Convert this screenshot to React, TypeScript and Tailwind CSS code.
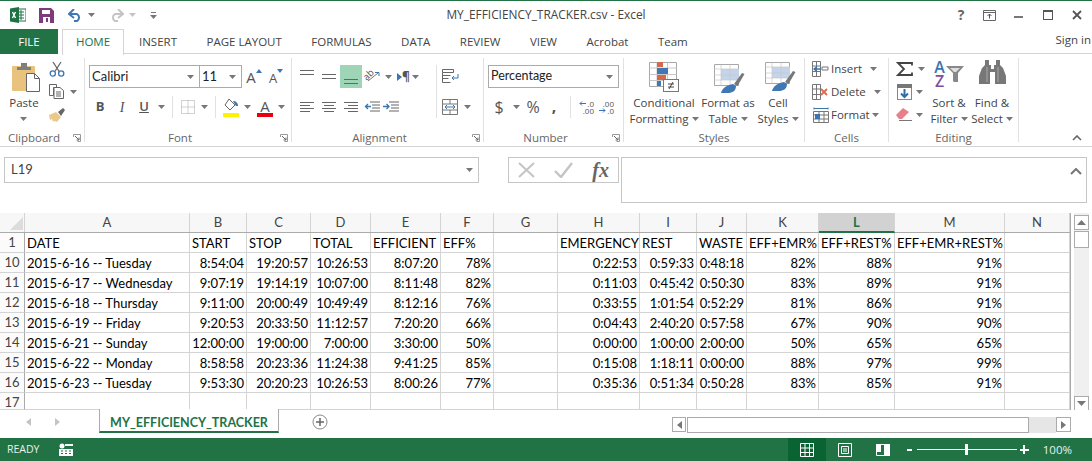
import React from 'react';

const Caret = ({ c = '#777' }: { c?: string }) => (
  <svg width="7" height="4" viewBox="0 0 7 4" className="shrink-0"><path d="M0 0h7L3.5 4z" fill={c} /></svg>
);
const Cell = ({ className = 'w-[22px]', children }: { className?: string; children?: React.ReactNode }) => (
  <span className={`flex items-center justify-center h-full shrink-0 ${className}`}>{children}</span>
);
const Sep = ({ className = 'w-[10px]' }: { className?: string }) => (
  <span className={`flex items-center justify-center h-full shrink-0 ${className}`}><span className="w-px h-[22px] bg-[#e1e1e1]" /></span>
);
const Launcher = () => (
  <svg width="8" height="8" viewBox="0 0 8 8"><path d="M.5 3V.5H7.5V7.5H4.5" fill="none" stroke="#999" /><path d="M2 2l4 4M3.5 6H6V3.5" fill="none" stroke="#666" /></svg>
);
const Lines = ({ rows }: { rows: [number, number, number][] }) => (
  <svg width="16" height="16" viewBox="0 0 16 16">{rows.map(([y, a, b], i) => <rect key={i} x={a} y={y} width={b - a} height="1" fill="#666" />)}</svg>
);

function Group({ w, label, launcher, children }: { w: string; label: string; launcher?: boolean; children: React.ReactNode }) {
  return (
    <div className={`flex h-full shrink-0 ${w}`}>
      <div className="flex-1 min-w-0 flex flex-col">
        <div className="h-[76px]">{children}</div>
        <div className="h-[16px] flex items-center text-[#666] text-[11.500px]">
          <span className="flex-1 text-center">{label}</span>
          {launcher && <span className="w-[16px] flex justify-end pr-[3px]"><Launcher /></span>}
        </div>
      </div>
      <div className="w-px my-[4px] bg-[#e1e1e1]" />
    </div>
  );
}

const PasteIcon = () => (
  <svg width="30" height="30" viewBox="0 0 30 30">
    <rect x="1" y="4" width="23" height="25" rx="1" fill="#e9c27d" />
    <path d="M6 8V5h4V1h6v4h4v3z" fill="#7f7f7f" />
    <path d="M15.500 11.500h8l5 5v13h-13z" fill="#fff" stroke="#666" />
    <path d="M23.500 11.500v5h5" fill="none" stroke="#666" />
  </svg>
);
const Scissors = () => (
  <svg width="16" height="16" viewBox="0 0 16 16" fill="none">
    <path d="M4 1l6.500 10M12 1L5.500 11" stroke="#666" strokeWidth="1.300" />
    <circle cx="3.800" cy="12.500" r="2.600" stroke="#3a76b0" strokeWidth="1.300" />
    <circle cx="12.200" cy="12.500" r="2.600" stroke="#3a76b0" strokeWidth="1.300" />
  </svg>
);
const CopyIcon = () => (
  <svg width="16" height="15" viewBox="0 0 16 15" fill="#fff" stroke="#666">
    <path d="M.5.500h7v3h-3v8h-4z" /><path d="M5 3.500h6l3.500 3v8H5z" /><path d="M7 8h5M7 10h5M7 12h5" />
  </svg>
);
const Brush = () => (
  <svg width="17" height="15" viewBox="0 0 17 15">
    <path d="M0 8l7-3 5 5-4 5-3-1-1 1-1-3-2 1z" fill="#ecc98b" />
    <path d="M9 5l5-4 2 2-4 6z" fill="#666" />
  </svg>
);
const GrowA = ({ up }: { up: boolean }) => (
  <span className="flex items-start h-[18px] font-['Open_Sans'] text-[#555]">
    <span className={up ? 'text-[15px] leading-[18px]' : 'text-[13px] leading-[20px]'}>A</span>
    <svg width="6" height="4" viewBox="0 0 6 4" className="mt-[1px]"><path d={up ? 'M0 4h6L3 0z' : 'M0 0h6L3 4z'} fill="#3a76b0" /></svg>
  </span>
);
const BordersIcon = () => (
  <svg width="14" height="14" viewBox="0 0 14 14" fill="none" stroke="#a5a5a5" strokeDasharray="1 1">
    <path d="M.5 .5h13v13h-13zM7 .5v13M.5 7h13" />
  </svg>
);
const FillIcon = () => (
  <svg width="16" height="19" viewBox="0 0 16 19">
    <path d="M6 1l6 6-5 5-5-5z" fill="#fff" stroke="#666" /><path d="M10 3c3 0 5 2 5 5h-2z" fill="#3a76b0" />
    <rect y="15" width="16" height="4" fill="#fff200" />
  </svg>
);
const FontColorIcon = () => (
  <span className="relative flex flex-col items-center w-[16px] h-[19px]">
    <span className="text-[#555] font-['Open_Sans'] text-[15px] leading-[16px]">A</span>
    <span className="w-[16px] h-[4px] bg-[#e8000d] -mt-[1px]" />
  </span>
);
const Orient = () => (
  <span className="flex items-center w-[19px] h-[17px]">
    <span className="text-[9.500px] leading-[10px] text-[#555] -rotate-45 font-['Open_Sans'] -ml-[1px] -mt-[3px]">ab</span>
    <svg width="9" height="10" viewBox="0 0 9 10" fill="none" className="-ml-[3px] mt-[1px] overflow-visible">
      <path d="M-3 9L7 1" stroke="#777" />
      <path d="M8 4V.5H4" stroke="#3a76b0" />
    </svg>
  </span>
);
const Rtl = () => (
  <span className="flex items-center h-[14px] text-[12px] leading-[14px] text-[#555] font-['Open_Sans']">
    <svg width="5" height="8" viewBox="0 0 5 8"><path d="M0 0l5 4-5 4z" fill="#3a76b0" /></svg>
    <b>¶</b>
  </span>
);
const Indent = ({ rev }: { rev?: boolean }) => (
  <svg width="16" height="12" viewBox="0 0 16 12">
    <path d="M6 1h10M8 4h8M8 7h8M6 10h10" stroke="#666" />
    <path d={rev ? 'M7 5.500H1.500M4 3L1.500 5.500 4 8' : 'M0 5.500h6M3.500 3L6 5.500 3.500 8'} stroke="#3a76b0" strokeWidth="1.300" fill="none" />
  </svg>
);
const WrapIcon = () => (
  <svg width="17" height="15" viewBox="0 0 17 15" fill="none">
    <path d="M.5.500h11v3H.5zM.5 6.500h8M.5 9.500h6M.5 13.500h8M.5 3.500v10" stroke="#666" />
    <path d="M16 5v4h-6M12 7l-2 2 2 2" stroke="#3a76b0" />
  </svg>
);
const MergeIcon = () => (
  <svg width="16" height="16" viewBox="0 0 16 16" fill="none">
    <path d="M.5.500h15v15H.5zM.5 5h15M.5 11h15M8 .5V5M8 11v4.500" stroke="#777" />
    <path d="M3 8h10M5 6L3 8l2 2M11 6l2 2-2 2" stroke="#3a76b0" />
  </svg>
);
const DecIcon = ({ inc }: { inc: boolean }) => (
  <span className="flex flex-col items-end w-[16px] text-[8px] leading-[7px] text-[#555] font-['Open_Sans']">
    <span className="flex items-center gap-px h-[7px]">
      {inc && <svg width="7" height="5" viewBox="0 0 7 5"><path d="M7 2.500H1M3 .5L1 2.500l2 2" stroke="#3a76b0" fill="none" /></svg>}
      {inc ? '.0' : '.00'}
    </span>
    <span className="flex items-center gap-px h-[7px]">
      {!inc && <svg width="7" height="5" viewBox="0 0 7 5"><path d="M0 2.500h6M4 .5l2 2-2 2" stroke="#3a76b0" fill="none" /></svg>}
      {inc ? '.00' : '.0'}
    </span>
  </span>
);
const CondIcon = () => (
  <svg width="30" height="30" viewBox="0 0 30 30">
    <path d="M.5.500h27v24H.5z" fill="#fff" stroke="#a8a8a8" />
    <path d="M.5 6h27M.5 12.500h27M.5 18.500h27M8 .5v24M18.500.5v24" stroke="#c8c8c8" />
    <rect x="8" y="0" width="6" height="5" fill="#d5694a" /><rect x="8" y="6" width="11" height="6" fill="#3f78b5" />
    <rect x="8" y="13" width="9" height="5" fill="#d5694a" /><rect x="8" y="19" width="4" height="5" fill="#3f78b5" />
    <rect x="14.500" y="17.500" width="15" height="12" fill="#fff" stroke="#777" />
    <path d="M19 22h6M19 25h6M24 20l-4 7" stroke="#444" />
  </svg>
);
const TableBrush = ({ fill, className = '' }: { fill: string; className?: string }) => (
  <svg width="31" height="30" viewBox="0 0 31 30" className={className}>
    <path d="M.5.500h24v21H.5z" fill="#fff" stroke="#a8a8a8" />
    <rect x="7" y="5" width="18" height="11" fill={fill} />
    <path d="M.5 5h24M.5 11h24M.5 16h24M7 .5v21M16 .5v21" stroke="#c8c8c8" strokeOpacity=".7" />
    <path d="M20 20L28 9l2.500 1-7 12z" fill="#777" />
    <path d="M7 29c1-5 6-8 12-9l3 2c0 5-4 7-8 7z" fill="#3f78b5" />
  </svg>
);
const InsertIcon = () => (
  <svg width="17" height="16" viewBox="0 0 17 16" fill="none">
    <path d="M.5.500h8v15h-8zM.5 5h8M.5 10.500h8M4.500.5v15M10 6h6v3h-6z" stroke="#777" />
    <path d="M9 8H2M5 5.500L2 8l3 2.500" stroke="#3a76b0" strokeWidth="1.300" />
  </svg>
);
const DeleteIcon = () => (
  <svg width="17" height="16" viewBox="0 0 17 16" fill="none">
    <path d="M.5.500h8v15h-8zM.5 5h8M.5 10.500h8M4.500.5v15" stroke="#777" />
    <path d="M9 5l6 6M15 5l-6 6" stroke="#e0684b" strokeWidth="1.800" />
  </svg>
);
const FormatIcon = () => (
  <svg width="16" height="16" viewBox="0 0 16 16" fill="none">
    <path d="M1 1.500h14M1 .5v2M15 .5v2" stroke="#3a76b0" />
    <path d="M.5 4.500h15v11H.5zM.5 8h15M.5 12h15M6 4.500v11M11 4.500v11" stroke="#777" />
    <rect x="2" y="7" width="5" height="5" fill="#3a76b0" />
  </svg>
);
const SigmaIcon = () => (
  <svg width="17" height="14" viewBox="0 0 17 14" fill="none"><path d="M16 3.500V1H2l6 6-6 6h14v-2.500" stroke="#444" strokeWidth="1.800" /></svg>
);
const FillDown = () => (
  <svg width="15" height="16" viewBox="0 0 15 16" fill="none">
    <rect x=".5" y=".5" width="14" height="15" fill="#fff" stroke="#888" /><rect x="0" y="0" width="15" height="4" fill="#777" />
    <path d="M7.500 5v8M4 9.500l3.500 3.500L11 9.500" stroke="#2f6ea8" strokeWidth="2" />
  </svg>
);
const Eraser = () => (
  <svg width="16" height="13" viewBox="0 0 16 13"><path d="M0 7l7-7 6 4-7 7H3z" fill="#e8808c" /><path d="M3 12.500h13" stroke="#777" /></svg>
);
const SortIcon = () => (
  <span className="flex items-start h-[28px] w-[32px] -mt-[2px]">
    <span className="flex flex-col items-center font-['Open_Sans'] font-semibold text-[16px] leading-[14px] w-[13px]">
      <span className="h-[14px] text-[#3a76b0]">A</span>
      <span className="h-[14px] text-[#7f4f9b]">Z</span>
    </span>
    <svg width="18" height="16" viewBox="0 0 18 16" className="mt-[6px]"><path d="M0 0h18l-6 7v9H8l-1-1V7z" fill="#888" /><path d="M4 2h10l-4 4H8z" fill="#ddd" /></svg>
  </span>
);
const Binoculars = () => (
  <svg width="27" height="24" viewBox="0 0 27 24" fill="#777" className="-mt-[2px]">
    <path d="M6 0h4v5h2v4h3V5h2V0h4v5l3 3 3 8v8H16V12h-5v12H0v-8l3-8 3-3z" />
    <path d="M8 7v15M19 7v15" stroke="#aaa" />
  </svg>
);

function Big({ w, icon, lines, iconCls = 'justify-center' }: { w: string; icon: React.ReactNode; lines: React.ReactNode[]; iconCls?: string }) {
  return (
    <div className={`flex flex-col items-center pt-[8px] shrink-0 ${w}`}>
      <div className={`h-[30px] w-full flex ${iconCls}`}>{icon}</div>
      <div className="mt-[3px] whitespace-nowrap text-center leading-[16px]">
        {lines.map((l, i) => <div key={i} className="flex items-center justify-center gap-[3px] h-[16px]">{l}</div>)}
      </div>
    </div>
  );
}
const Small = ({ icon, text, gap }: { icon: React.ReactNode; text: string; gap: string }) => (
  <div className="flex items-center h-[23px]">
    <Cell className="w-[17px]">{icon}</Cell>
    <span className={`ml-[2px] ${gap}`}>{text}</span>
    <Caret />
  </div>
);

const Ribbon = () => (
  <div className="flex h-[93px] border-b border-[#d4d4d4] text-[11.500px] text-[#444]">
    <Group w="w-[85px]" label="Clipboard" launcher>
      <div className="flex h-full">
        <Big w="w-[48px]" icon={<PasteIcon />} iconCls="justify-center pl-[4px]" lines={['Paste', <Caret />]} />
        <div className="pt-[3px] w-[36px]">
          <div className="h-[23px] flex items-center pl-[1px]"><Scissors /></div>
          <div className="h-[23px] flex items-center pl-[1px] gap-[5px]"><CopyIcon /><Caret /></div>
          <div className="h-[23px] flex items-center pl-[1px]"><Brush /></div>
        </div>
      </div>
    </Group>
    <Group w="w-[207px]" label="Font" launcher>
      <div className="pt-[11px] pl-[4px]">
        <div className="flex items-center h-[23px]">
          <div className="w-[111px] h-full border border-[#ababab] flex items-center justify-between pl-[2px] pr-[5px] text-[13px] text-[#222] font-['Lato']">Calibri<Caret /></div>
          <div className="w-[43px] -ml-px h-full border border-[#ababab] flex items-center justify-between pl-[2px] pr-[5px] text-[13px] text-[#222] font-['Lato']">11<Caret /></div>
          <Cell className="w-[22px] ml-[1px]"><GrowA up /></Cell>
          <Cell className="w-[22px]"><GrowA up={false} /></Cell>
        </div>
        <div className="flex items-center h-[22px] mt-[8px] text-[#555] font-['Liberation_Serif'] text-[14px]">
          <Cell><b className="font-['Open_Sans'] text-[13px]">B</b></Cell>
          <Cell><i className="text-[14px]">I</i></Cell>
          <Cell><span className="underline font-['Open_Sans'] font-semibold text-[13px]">U</span></Cell>
          <Cell className="w-[12px]"><Caret /></Cell>
          <Sep />
          <Cell className="w-[21px]"><BordersIcon /></Cell>
          <Cell className="w-[12px]"><Caret /></Cell>
          <Sep />
          <Cell><FillIcon /></Cell>
          <Cell className="w-[11px]"><Caret /></Cell>
          <Cell className="w-[22px] ml-[1px]"><FontColorIcon /></Cell>
          <Cell className="w-[11px]"><Caret /></Cell>
        </div>
      </div>
    </Group>
    <Group w="w-[192px]" label="Alignment" launcher>
      <div className="flex pl-[4px] pt-[11px]">
        <div className="w-[140px]">
          <div className="flex items-center h-[23px]">
            <Cell><Lines rows={[[1, 1, 15], [5, 1, 15]]} /></Cell>
            <Cell><Lines rows={[[5, 1, 15], [9, 1, 15]]} /></Cell>
            <Cell className="w-[22px] bg-[#9fd5b7]"><Lines rows={[[10, 1, 15], [14, 1, 15]]} /></Cell>
            <Cell className="ml-[2px]"><Orient /></Cell>
            <Cell className="w-[10px]"><Caret /></Cell>
            <Cell className="ml-[4px]"><Rtl /></Cell>
            <Cell className="w-[11px]"><Caret /></Cell>
          </div>
          <div className="flex items-center h-[22px] mt-[8px]">
            <Cell><Lines rows={[[3, 1, 15], [6, 1, 11], [9, 1, 15], [12, 1, 11]]} /></Cell>
            <Cell><Lines rows={[[3, 1, 15], [6, 3, 13], [9, 1, 15], [12, 3, 13]]} /></Cell>
            <Cell><Lines rows={[[3, 1, 15], [6, 5, 15], [9, 1, 15], [12, 5, 15]]} /></Cell>
            <Cell className="ml-[2px]"><Indent rev /></Cell>
            <Cell><Indent /></Cell>
          </div>
        </div>
        <div className="w-px h-[53px] bg-[#e1e1e1] mr-[2px]" />
        <div>
          <div className="h-[23px] w-[22px] flex items-center justify-center"><WrapIcon /></div>
          <div className="flex items-center h-[22px] mt-[8px]"><Cell><MergeIcon /></Cell><Cell className="w-[12px]"><Caret /></Cell></div>
        </div>
      </div>
    </Group>
    <Group w="w-[140px]" label="Number" launcher>
      <div className="pt-[11px] pl-[4px]">
        <div className="w-[131px] h-[23px] border border-[#ababab] flex items-center justify-between pl-[2px] pr-[5px] text-[12.500px] text-[#222] font-['Lato']">Percentage<Caret /></div>
        <div className="flex items-center h-[22px] mt-[8px] text-[#555] font-['Open_Sans']">
          <Cell><span className="text-[16px]">$</span></Cell>
          <Cell className="w-[12px]"><Caret /></Cell>
          <Cell><span className="text-[16px]">%</span></Cell>
          <Cell className="w-[20px]"><b className="text-[16px] leading-[12px] -mt-[2px]">,</b></Cell>
          <Sep className="w-[12px]" />
          <Cell className="w-[20px]"><DecIcon inc /></Cell>
          <Cell className="w-[20px]"><DecIcon inc={false} /></Cell>
        </div>
      </div>
    </Group>
    <Group w="w-[181px]" label="Styles">
      <div className="flex pl-[6px]">
        <Big w="w-[68px]" icon={<CondIcon />} lines={['Conditional', <>Formatting <Caret /></>]} />
        <Big w="w-[56px] ml-[2px]" icon={<TableBrush fill="#c4d4ea" className="mt-[2px] ml-[3px] shrink-0" />} iconCls="justify-center" lines={['Format as', <>Table <Caret /></>]} />
        <Big w="w-[40px] ml-[2px]" icon={<TableBrush fill="#c4d4ea" className="ml-[7px] shrink-0" />} iconCls="justify-start" lines={['Cell', <>Styles <Caret /></>]} />
      </div>
    </Group>
    <Group w="w-[84px]" label="Cells">
      <div className="pt-[3px] pl-[7px]">
        <Small icon={<InsertIcon />} text="Insert" gap="mr-[8px]" />
        <Small icon={<DeleteIcon />} text="Delete" gap="mr-[8px]" />
        <Small icon={<FormatIcon />} text="Format" gap="mr-[2px]" />
      </div>
    </Group>
    <Group w="w-[130px]" label="Editing">
      <div className="flex pl-[7px]">
        <div className="pt-[3px] w-[34px]">
          <div className="h-[23px] flex items-center gap-[5px]"><SigmaIcon /><Caret /></div>
          <div className="h-[23px] flex items-center gap-[4px]"><span className="w-[16px] flex justify-center"><FillDown /></span><Caret /></div>
          <div className="h-[23px] flex items-center gap-[4px]"><span className="w-[16px] flex justify-center"><Eraser /></span><Caret /></div>
        </div>
        <Big w="w-[40px] ml-[-1px]" icon={<SortIcon />} lines={['Sort &', <>Filter <Caret /></>]} />
        <Big w="w-[42px] ml-[2px]" icon={<Binoculars />} lines={['Find &', <>Select <Caret /></>]} />
      </div>
    </Group>
    <div className="flex-1 flex items-end justify-end pr-[10px] pb-[5px]">
      <svg width="10" height="6" viewBox="0 0 10 6" fill="none"><path d="M1 5l4-4 4 4" stroke="#666" strokeWidth="1.600" /></svg>
    </div>
  </div>
);

const tabs = ['INSERT', 'PAGE LAYOUT', 'FORMULAS', 'DATA', 'REVIEW', 'VIEW', 'Acrobat', 'Team'];

const widths = ['w-[25px]', 'w-[165px]', 'w-[57px]', 'w-[64px]', 'w-[60px]', 'w-[70px]', 'w-[53px]', 'w-[64px]', 'w-[82px]', 'w-[57px]', 'w-[50px]', 'w-[72px]', 'w-[76px]', 'w-[110px]', 'w-[65px]'];
const heads = ['', 'A', 'B', 'C', 'D', 'E', 'F', 'G', 'H', 'I', 'J', 'K', 'L', 'M', 'N'];
const row1 = ['1', 'DATE', 'START', 'STOP', 'TOTAL', 'EFFICIENT', 'EFF%', '', 'EMERGENCY', 'REST', 'WASTE', 'EFF+EMR%', 'EFF+REST%', 'EFF+EMR+REST%', ''];
const rows = [
  ['10', '2015-6-16 -- Tuesday', '8:54:04', '19:20:57', '10:26:53', '8:07:20', '78%', '', '0:22:53', '0:59:33', '0:48:18', '82%', '88%', '91%', ''],
  ['11', '2015-6-17 -- Wednesday', '9:07:19', '19:14:19', '10:07:00', '8:11:48', '82%', '', '0:11:03', '0:45:42', '0:50:30', '83%', '89%', '91%', ''],
  ['12', '2015-6-18 -- Thursday', '9:11:00', '20:00:49', '10:49:49', '8:12:16', '76%', '', '0:33:55', '1:01:54', '0:52:29', '81%', '86%', '91%', ''],
  ['13', '2015-6-19 -- Friday', '9:20:53', '20:33:50', '11:12:57', '7:20:20', '66%', '', '0:04:43', '2:40:20', '0:57:58', '67%', '90%', '90%', ''],
  ['14', '2015-6-21 -- Sunday', '12:00:00', '19:00:00', '7:00:00', '3:30:00', '50%', '', '0:00:00', '1:00:00', '2:00:00', '50%', '65%', '65%', ''],
  ['15', '2015-6-22 -- Monday', '8:58:58', '20:23:36', '11:24:38', '9:41:25', '85%', '', '0:15:08', '1:18:11', '0:00:00', '88%', '97%', '99%', ''],
  ['16', '2015-6-23 -- Tuesday', '9:53:30', '20:20:23', '10:26:53', '8:00:26', '77%', '', '0:35:36', '0:51:34', '0:50:28', '83%', '85%', '91%', ''],
];

function Row({ cells, h = 'h-[20px]', right }: { cells: string[]; h?: string; right?: boolean }) {
  return (
    <div className={`flex ${h}`}>
      {cells.map((c, i) => (
        <div key={i} className={`${widths[i]} shrink-0 border-b ${i === 0 ? 'border-r border-r-[#ababab] border-b-[#d4d4d4] text-center text-[#444] bg-[#fbfbfb] leading-[19px]' : `border-r border-[#d4d4d4] text-black px-[2px] leading-[20px] whitespace-nowrap overflow-hidden ${right && i !== 1 ? 'text-right' : ''}`}`}>{c}</div>
      ))}
    </div>
  );
}

const Grid = () => (
  <div className="flex h-[197px] font-['Lato'] text-[13px]">
    <div className="w-[1071px] shrink-0 flex flex-col border-r border-[#ababab] border-b">
      <div className="flex h-[20px] border-b border-[#ababab]">
        {heads.map((c, i) => (
          <div key={i} className={`${widths[i]} shrink-0 text-center leading-[19px] border-r border-[#d4d4d4] ${i === 12 ? 'bg-[#d2d2d2] border-b-2 border-b-[#217346] text-[#217346] font-bold h-[20px]' : 'bg-[#f7f7f7] text-[#444]'}`}>
            {i === 0 ? (
              <svg width="13" height="13" viewBox="0 0 13 13" className="ml-[10px] mt-[4px]"><path d="M13 0v13H0z" fill="#dcdcdc" /></svg>
            ) : c}
          </div>
        ))}
      </div>
      <Row cells={row1} />
      {rows.map((r) => <Row key={r[0]} cells={r} right />)}
      <Row cells={['17', '', '', '', '', '', '', '', '', '', '', '', '', '', '']} h="h-[17px]" />
    </div>
    <div className="flex-1 pl-[3px] pr-[3px] bg-white">
      <div className="h-full bg-[#f0f0f0] flex flex-col">
        <div className="h-[15px] mt-[2px] border border-[#ababab] bg-white flex items-center justify-center">
          <svg width="9" height="5" viewBox="0 0 9 5"><path d="M0 5h9L4.500 0z" fill="#777" /></svg>
        </div>
        <div className="h-[17px] mt-[1px] border border-[#ababab] bg-white" />
        <div className="flex-1" />
        <div className="h-[15px] mb-[-1px] border border-[#ababab] bg-white flex items-center justify-center">
          <svg width="9" height="5" viewBox="0 0 9 5"><path d="M0 0h9L4.500 5z" fill="#777" /></svg>
        </div>
      </div>
    </div>
  </div>
);

const SheetBar = () => (
  <div className="flex h-[28px] bg-white">
    <div className="w-[99px] flex items-center pb-[4px]">
      <svg width="5" height="8" viewBox="0 0 5 8" className="ml-[26px]"><path d="M5 0v8L0 4z" fill="#c4c4c4" /></svg>
      <svg width="5" height="8" viewBox="0 0 5 8" className="ml-[24px]"><path d="M0 0v8l5-4z" fill="#c4c4c4" /></svg>
    </div>
    <div className="w-[180px] h-[24px] bg-white border-x border-b-2 border-x-[#ababab] border-b-[#217346] -mt-px text-center font-['Lato'] font-bold text-[#217346] text-[12.500px] leading-[27px]">MY_EFFICIENCY_TRACKER</div>
    <div className="w-[393px] flex items-center pb-[4px] pl-[33px]">
      <svg width="16" height="16" viewBox="0 0 16 16" fill="none"><circle cx="8" cy="8" r="7" stroke="#8a8a8a" /><path d="M4 8h8M8 4v8" stroke="#666" strokeWidth="1.500" /></svg>
    </div>
    <div className="flex pt-[7px] h-[23px]">
      <div className="w-[14px] h-[15px] border border-[#ababab] flex items-center justify-center">
        <svg width="5" height="8" viewBox="0 0 5 8"><path d="M5 0v8L0 4z" fill="#777" /></svg>
      </div>
      <div className="w-[369px] ml-[1px] h-[16px] bg-[#e6e6e6] flex">
        <div className="w-[342px] h-full bg-white border border-[#ababab]" />
      </div>
      <div className="w-[15px] h-[15px] border border-[#ababab] flex items-center justify-center">
        <svg width="5" height="8" viewBox="0 0 5 8"><path d="M0 0v8l5-4z" fill="#777" /></svg>
      </div>
    </div>
  </div>
);

const StatusBar = () => (
  <div className="flex items-center h-[23px] bg-[#217346] text-white text-[11.500px] font-['Open_Sans']">
    <span className="ml-[7px] text-[10.500px] text-[#e8f1ec]">READY</span>
    <svg width="14" height="13" viewBox="0 0 14 13" className="ml-[20px]" fill="#fff">
      <circle cx="3" cy="3" r="2.500" /><path d="M6 1h8v2H6z" />
      <path d="M0 6h14v7H0z" /><path d="M2 8h2M6 8h2M10 8h2M2 10.500h2M6 10.500h2M10 10.500h2" stroke="#217346" />
    </svg>
    <div className="flex-1" />
    <div className="w-[38px] h-full bg-[#0a6332] flex items-center justify-center">
      <svg width="14" height="14" viewBox="0 0 14 14" fill="none" stroke="#fff"><path d="M.5.500h13v13H.5zM5 .5v13M9.500.5v13M.5 5h13M.5 9.500h13" /></svg>
    </div>
    <div className="w-[38px] h-full flex items-center justify-center">
      <svg width="14" height="14" viewBox="0 0 14 14" fill="none" stroke="#fff"><path d="M.5.500h13v13H.5zM3.500 3.500h7v7h-7zM5 6h4M5 8h4" /></svg>
    </div>
    <div className="w-[38px] h-full flex items-center justify-center">
      <svg width="14" height="12" viewBox="0 0 14 12"><path d="M.5.500h13v11H.5z" fill="none" stroke="#fff" /><path d="M0 0h5v8H0zM8 0h6v12H8z" fill="#fff" /></svg>
    </div>
    <div className="w-[5px] h-[2px] bg-white ml-[5px]" />
    <div className="w-[100px] h-px bg-white ml-[5px] flex items-center justify-center"><span className="w-[3px] h-[11px] bg-white shrink-0" /></div>
    <span className="ml-[3px] w-[9px] h-[9px] flex items-center justify-center relative">
      <span className="w-[9px] h-[2px] bg-white" /><span className="absolute w-[2px] h-[9px] bg-white" />
    </span>
    <span className="ml-[14px] mr-[20px] text-[#e8f1ec]">100%</span>
  </div>
);

export default function App() {
  return (
    <div className="w-[1092px] h-[461px] overflow-hidden bg-white flex flex-col font-['Open_Sans',sans-serif]">
      <div className="h-px bg-[#217346]" />
      <div className="grid grid-cols-[1fr_auto_1fr] items-center h-[28px]">
        <div className="flex items-center pl-[10px]">
          <svg width="16" height="16" viewBox="0 0 16 16">
            <rect x="6" y="2" width="10" height="12" fill="#fff" stroke="#1f7244" />
            <path d="M8 5h6M8 8h6M8 11h6M11 3v10" stroke="#1f7244" />
            <path d="M0 1.500L9 0v16l-9-1.500z" fill="#1f7244" />
            <path d="M2.500 5l3 6M5.500 5l-3 6" stroke="#fff" strokeWidth="1.400" />
          </svg>
          <svg width="15" height="15" viewBox="0 0 15 15" className="ml-[13px]">
            <path d="M0 0h12l3 3v12H0z" fill="#80397b" /><rect x="3" y="2" width="8" height="4" fill="#fff" /><rect x="4" y="9" width="7" height="6" fill="#fff" /><rect x="7" y="10" width="2" height="4" fill="#80397b" />
          </svg>
          <svg width="15" height="13" viewBox="0 0 15 13" fill="none" className="ml-[14px]"><path d="M1 5h8a4 4 0 0 1 0 7H6" stroke="#3f78b5" strokeWidth="2" /><path d="M6 0L1 5l5 4" stroke="#3f78b5" strokeWidth="2" /></svg>
          <span className="ml-[5px]"><Caret /></span>
          <svg width="15" height="13" viewBox="0 0 15 13" fill="none" className="ml-[14px]"><path d="M14 5H6a4 4 0 0 0 0 7h3" stroke="#c4c4c4" strokeWidth="2" /><path d="M9 0l5 5-5 4" stroke="#c4c4c4" strokeWidth="2" /></svg>
          <span className="ml-[5px]"><Caret c="#c4c4c4" /></span>
          <svg width="7" height="7" viewBox="0 0 7 7" className="ml-[14px]"><path d="M1 .5h5" stroke="#777" /><path d="M0 3h7L3.500 7z" fill="#777" /></svg>
        </div>
        <div className="text-[11.900px] text-[#444]">MY_EFFICIENCY_TRACKER.csv - Excel</div>
        <div className="flex items-center justify-end">
          <span className="text-[14px] font-bold text-[#666] leading-none w-[16px] text-center">?</span>
          <svg width="13" height="11" viewBox="0 0 13 11" className="ml-[14px]" fill="none"><path d="M.5.500h12v10H.5zM.5 2.500h12" stroke="#666" /><path d="M6.500 8.500V4M4.500 6l2-2 2 2" stroke="#555" /></svg>
          <span className="w-[9px] h-[2px] bg-[#777] ml-[18px] mt-[4px]" />
          <span className="w-[10px] h-[10px] border border-[#555] border-t-[2px] ml-[20px]" />
          <svg width="10" height="10" viewBox="0 0 10 10" className="ml-[19px] mr-[10px]"><path d="M1 1l8 8M9 1l-8 8" stroke="#555" strokeWidth="1.800" /></svg>
        </div>
      </div>
      <div className="flex h-[25px] text-[11.500px] text-[#444] items-stretch relative">
        <div className="w-[58px] bg-[#217346] text-white text-center leading-[25px]">FILE</div>
        <div className="ml-[4px] w-[62px] text-center text-[#217346] border-x border-t border-[#d4d4d4] h-[26px] bg-white z-10 leading-[24px]">HOME</div>
        <div className="flex-1 flex border-b border-[#d4d4d4] pl-[15px]">
          {tabs.map((t) => <span key={t} className="mr-[29.500px] leading-[25px] whitespace-nowrap">{t}</span>)}
          <span className="ml-auto pr-[1px] leading-[22px]">Sign in</span>
        </div>
      </div>
      <Ribbon />
      <div className="flex h-[66px] pt-[10px] pl-[4px] pr-[5px] text-[12px] text-[#444]">
        <div className="w-[475px] h-[26px] border border-[#c6c6c6] flex items-center justify-between pl-[6px] pr-[5px] text-[13px] font-['Lato']">L19<Caret /></div>
        <div className="w-[111px] h-[26px] ml-[29px] border border-[#c6c6c6] flex items-center justify-between px-[9px]">
          <svg width="17" height="16" viewBox="0 0 17 16"><path d="M1 1l15 14M16 1L1 15" stroke="#c4c4c4" strokeWidth="2" /></svg>
          <svg width="19" height="16" viewBox="0 0 19 16"><path d="M1 9l6 6L18 1" stroke="#c4c4c4" strokeWidth="2.400" fill="none" /></svg>
          <i className="font-['Liberation_Serif'] font-bold text-[20px] leading-none text-[#666]">fx</i>
        </div>
        <div className="flex-1 h-[46px] ml-[2px] border border-[#c6c6c6] flex justify-end pt-[10px] pr-[4px]">
          <svg width="12" height="7" viewBox="0 0 12 7" fill="none"><path d="M1 6l5-5 5 5" stroke="#777" strokeWidth="2" /></svg>
        </div>
      </div>
      <Grid />
      <SheetBar />
      <StatusBar />
    </div>
  );
}
